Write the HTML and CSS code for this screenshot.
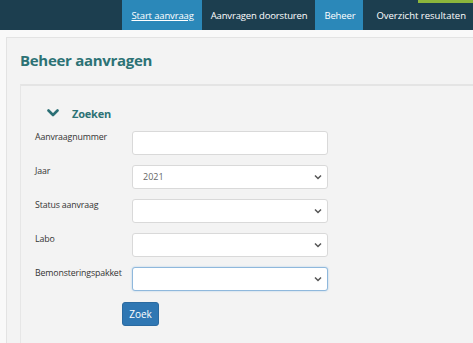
FILE: index.html
```html
<!DOCTYPE html>
<html lang="nl">
<head>
  <meta charset="UTF-8">
  <title>Beheer aanvragen</title>
  <link rel="stylesheet" href="styles.css">
</head>
<body>

  <!-- Top navigation -->
  <div class="topbar">
    <div class="accent"></div>
    <nav class="nav">
      <a class="navitem light underline">Start aanvraag</a>
      <a class="navitem">Aanvragen doorsturen</a>
      <a class="navitem light">Beheer</a>
      <a class="navitem">Overzicht resultaten</a>
    </nav>
  </div>

  <div class="page">
    <div class="panel">
      <h1 class="title">Beheer aanvragen</h1>

      <div class="inner">
        <div class="toggle">
          <svg class="chev" width="12" height="8" viewBox="0 0 12 8">
            <path d="M1.5 1.5 L6 6 L10.5 1.5" fill="none" stroke="#2b6f75" stroke-width="2.6" stroke-linecap="round" stroke-linejoin="round"/>
          </svg>
          <span>Zoeken</span>
        </div>

        <div class="row">
          <label class="lbl">Aanvraagnummer</label>
          <input class="field" type="text">
        </div>
        <div class="row">
          <label class="lbl">Jaar</label>
          <div class="sel">
            <div class="field seltext">2021</div>
            <svg class="arrow" width="8" height="6" viewBox="0 0 8 6"><path d="M1 1.5 L4 4.5 L7 1.5" fill="none" stroke="#555" stroke-width="1.5"/></svg>
          </div>
        </div>
        <div class="row">
          <label class="lbl">Status aanvraag</label>
          <div class="sel">
            <div class="field"></div>
            <svg class="arrow" width="8" height="6" viewBox="0 0 8 6"><path d="M1 1.5 L4 4.5 L7 1.5" fill="none" stroke="#555" stroke-width="1.5"/></svg>
          </div>
        </div>
        <div class="row">
          <label class="lbl">Labo</label>
          <div class="sel">
            <div class="field"></div>
            <svg class="arrow" width="8" height="6" viewBox="0 0 8 6"><path d="M1 1.5 L4 4.5 L7 1.5" fill="none" stroke="#555" stroke-width="1.5"/></svg>
          </div>
        </div>
        <div class="row">
          <label class="lbl">Bemonsteringspakket</label>
          <div class="sel">
            <div class="field focus"></div>
            <svg class="arrow" width="8" height="6" viewBox="0 0 8 6"><path d="M1 1.5 L4 4.5 L7 1.5" fill="none" stroke="#555" stroke-width="1.5"/></svg>
          </div>
        </div>

        <div class="actions">
          <button class="btn">Zoek</button>
        </div>
      </div>
    </div>
  </div>

</body>
</html>
```

FILE: styles.css
```css
body { margin: 0; background: #f9f9f9; font-family: "Open Sans", "Noto Sans", sans-serif; overflow: hidden; height: 343px; }

.topbar { position: relative; background: #1c3e4f; height: 30px; }
.accent { position: absolute; top: 0; right: 0; width: 55px; height: 3px; background: #8cb63c; }
.nav { display: flex; justify-content: flex-end; height: 30px; }
.navitem { display: flex; align-items: center; padding: 0 8px 0 9px; color: #fff; font-size: 9.5px; letter-spacing: -0.15px; }
.navitem:last-child { padding: 0 7px 0 13px; letter-spacing: 0; }
.light { background: #2b88b9; }
.underline { text-decoration: underline; }

.page { padding: 7px 0 0 6px; }
.panel { background: #f3f3f3; border: 1px solid #e3e3e3; border-right: none; height: 320px; }
.title { margin: 0; padding: 12px 0 0 13px; height: 34px; font-size: 15px; font-weight: 700; letter-spacing: -0.3px; color: #2c7275; }
.inner { margin-left: 13px; border-top: 2px solid #e4e4e4; border-left: 1px solid #e6e6e6; padding-top: 19px; height: 260px; }

.toggle { display: flex; align-items: center; gap: 13px; padding-left: 26px; height: 16px; color: #2c7275; font-weight: 700; font-size: 11px; letter-spacing: -0.2px; }
.chev { display: block; }

.row { display: flex; height: 24px; margin-top: 10px; }
.row:first-of-type { margin-top: 6px; }
.lbl { width: 97px; padding-left: 14px; font-size: 8.8px; letter-spacing: -0.15px; color: #333; line-height: 12px; }
.field { box-sizing: border-box; width: 196px; height: 24px; border: 1px solid #d9d9d9; border-radius: 3px; background: #fff; margin: 0; padding: 0 10px; }
.sel { position: relative; }
.seltext { font-size: 9px; color: #666; line-height: 22px; }
.arrow { position: absolute; right: 6px; top: 9px; }
.focus { border-color: #8fb8dc; box-shadow: 0 0 2px #a9cbe8; }

.actions { padding: 10px 0 0 101px; }
.btn { background: #2f77b3; color: #fff; border: 1px solid #2a6aa0; border-radius: 3px; width: 37px; height: 24px; padding: 0; font-family: inherit; font-size: 10px; }
```
